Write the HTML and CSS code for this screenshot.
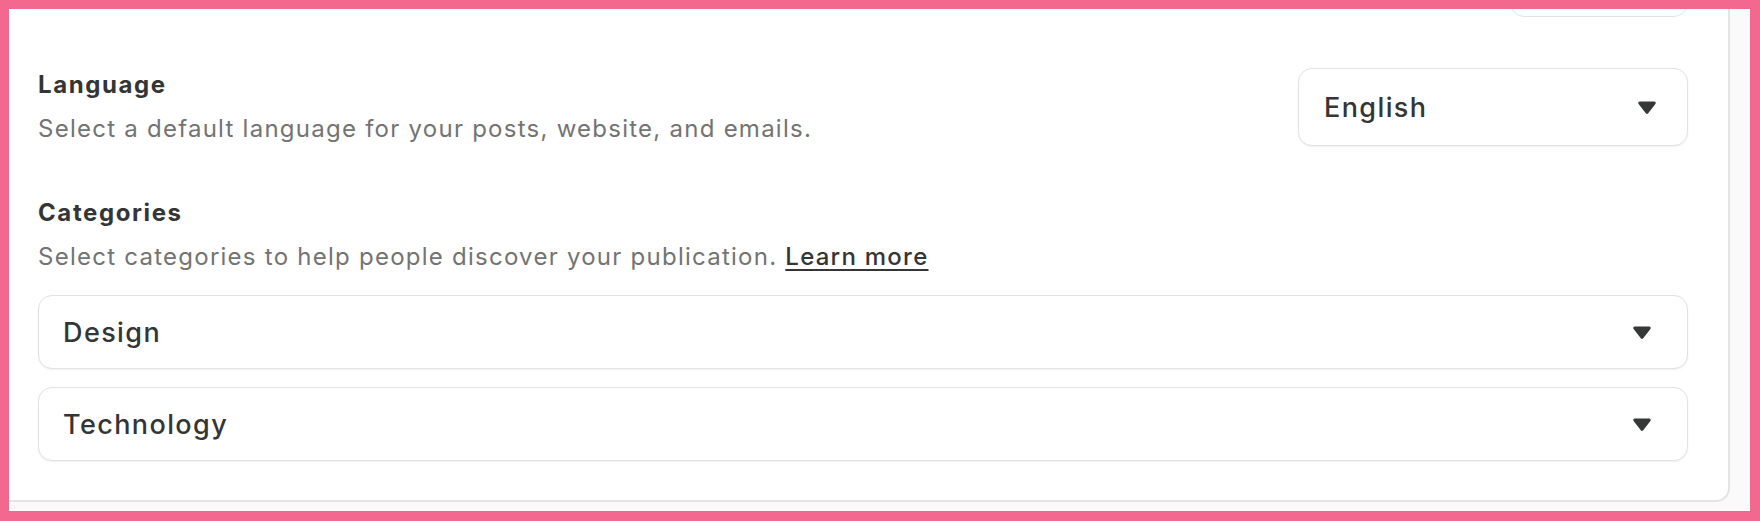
FILE: index.html
```html
<!DOCTYPE html>
<html lang="en">
<head>
    <meta charset="UTF-8">
    <meta name="viewport" content="width=device-width, initial-scale=1.0">
    <title>Publication Settings</title>
    <link rel="stylesheet" href="styles.css">
</head>
<body>
    <div class="page">
        <div class="card">
            <div class="top-actions">
                <button class="top-button"></button>
            </div>
            <div class="setting-row">
                <div class="setting-text">
                    <h2>Language</h2>
                    <p>Select a default language for your posts, website, and emails.</p>
                </div>
                <div class="select select-small">
                    <span>English</span>
                    <svg class="caret" width="18" height="13" viewBox="0 0 18 13"><path d="M1.8 0.5h14.4a1.5 1.5 0 0 1 1.2 2.4l-7.2 9.3a1.5 1.5 0 0 1-2.4 0L0.6 2.9A1.5 1.5 0 0 1 1.8 0.5z"/></svg>
                </div>
            </div>
            <div class="setting-block">
                <div class="setting-text">
                    <h2>Categories</h2>
                    <p>Select categories to help people discover your publication. <a href="#">Learn more</a></p>
                </div>
                <div class="select-list">
                    <div class="select">
                        <span>Design</span>
                        <svg class="caret" width="18" height="13" viewBox="0 0 18 13"><path d="M1.8 0.5h14.4a1.5 1.5 0 0 1 1.2 2.4l-7.2 9.3a1.5 1.5 0 0 1-2.4 0L0.6 2.9A1.5 1.5 0 0 1 1.8 0.5z"/></svg>
                    </div>
                    <div class="select">
                        <span>Technology</span>
                        <svg class="caret" width="18" height="13" viewBox="0 0 18 13"><path d="M1.8 0.5h14.4a1.5 1.5 0 0 1 1.2 2.4l-7.2 9.3a1.5 1.5 0 0 1-2.4 0L0.6 2.9A1.5 1.5 0 0 1 1.8 0.5z"/></svg>
                    </div>
                </div>
            </div>
        </div>
    </div>
    <div class="highlight-frame"></div>
</body>
</html>
```

FILE: styles.css
```css
body {
    margin: 0;
    padding: 0;
    font-family: Inter, "Noto Sans", sans-serif;
    background-color: #fafafa;
    color: #363737;
    overflow: hidden;
}
.page {
    height: 521px;
    box-sizing: border-box;
    padding: 0 30px 0 0;
}
.card {
    background-color: #ffffff;
    border-right: 2px solid #e4e4e4;
    border-bottom: 2px solid #e4e4e4;
    border-bottom-right-radius: 14px;
    padding: 0 40px 39px 38px;
}
.top-actions {
    display: flex;
    justify-content: flex-end;
}
.top-button {
    width: 178px;
    height: 44px;
    margin-top: -27px;
    background: #ffffff;
    border: 1.5px solid #e4e4e4;
    border-radius: 14px;
}
.setting-row {
    display: flex;
    justify-content: space-between;
    align-items: center;
    margin-top: 51px;
}
.setting-block {
    margin-top: 51px;
}
h2 {
    margin: 0;
    font-size: 24px;
    line-height: 32px;
    font-weight: 700;
    letter-spacing: 1.6px;
    color: #343535;
}
.setting-text p {
    margin: 12px 0 0;
    font-size: 24px;
    line-height: 32px;
    color: #737373;
    letter-spacing: 1.25px;
}
.setting-text a {
    color: #343535;
    font-weight: 500;
    text-decoration: underline;
    text-underline-offset: 4px;
    text-decoration-thickness: 2px;
}
.select-list {
    display: flex;
    flex-direction: column;
    gap: 18px;
    margin-top: 22px;
}
.select {
    display: flex;
    justify-content: space-between;
    align-items: center;
    height: 74px;
    box-sizing: border-box;
    padding: 0 36px 0 24px;
    background: #ffffff;
    border: 1.5px solid #e2e2e2;
    border-radius: 14px;
    box-shadow: 0 1px 2px rgba(0, 0, 0, 0.06);
    font-size: 27px;
    font-weight: 500;
    letter-spacing: 1.4px;
    color: #343535;
}
.select-small {
    width: 390px;
    height: 78px;
    padding: 0 31px 0 25px;
}
.caret {
    fill: #363737;
}
.highlight-frame {
    position: fixed;
    top: 0;
    left: 0;
    right: 0;
    bottom: 0;
    border-style: solid;
    border-color: #f2688e;
    border-width: 9px 10px 10px 9px;
    pointer-events: none;
}
```
